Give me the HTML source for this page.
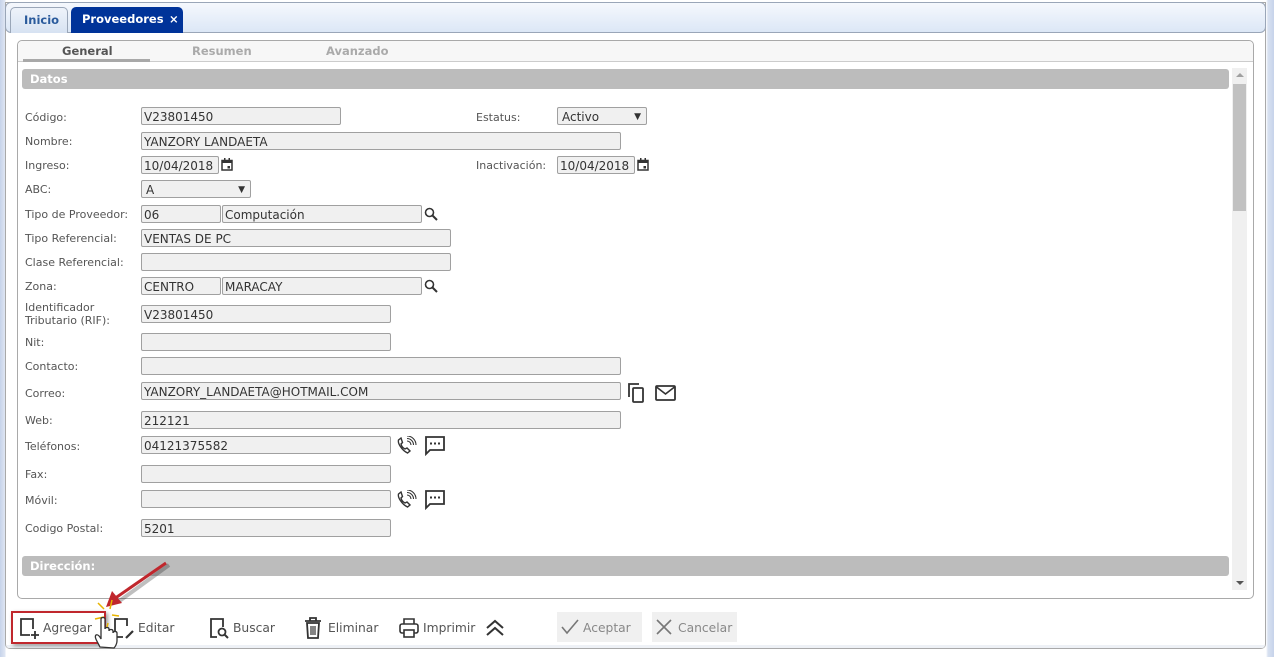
<!DOCTYPE html>
<html><head><meta charset="utf-8">
<style>
*{box-sizing:border-box;margin:0;padding:0}
body{width:1274px;height:655px;overflow:hidden;background:linear-gradient(90deg,#c6d3ea 0,#dfe6f3 5px,#fff 6px,#fff 1266px,#d8e1f1 1268px,#c6d3ea 100%);font-family:"DejaVu Sans","Liberation Sans",sans-serif;position:relative}
.a{position:absolute}
.outer{left:5px;top:2px;width:1261px;height:647px;border:1px solid #a9a9a9;border-radius:0 0 5px 5px;background:#fff}
.hdr{left:5px;top:2px;width:1261px;height:31px;border:1px solid #9aa6b8;border-radius:6px;background:linear-gradient(#f5f8fd,#dce7f6)}
.tab{top:7px;height:26px;border-radius:5px 5px 0 0;font-weight:bold;font-size:11.5px;line-height:25px;padding-left:13px}
.inner{left:17px;top:40px;width:1237px;height:559px;border:1px solid #a9a9a9;border-radius:5px}
.sec{background:#bcbcbc;color:#fff;font-weight:bold;font-size:11.5px;line-height:20px;padding-left:8px;border-radius:3px}
.l{left:25px;font-size:11px;color:#555;line-height:13px}
.i{height:18px;background:#f0f0f0;border:1px solid #a0a0a0;border-radius:2px;font-size:12px;color:#333;line-height:18px;padding-left:2px;white-space:nowrap;overflow:hidden}
.tb{top:613px;height:30px;font-size:12.3px;color:#555;line-height:30px}
</style></head><body>
<div class="a outer"></div>
<div class="a hdr"></div>
<div class="a tab" style="left:10px;width:58px;border:1px solid #9aa6b8;border-bottom:none;background:linear-gradient(#eef3fa,#d7e2f2);color:#2a5a9c">Inicio</div>
<div class="a tab" style="left:71px;width:112px;background:#003399;color:#fff;padding-left:11px">Proveedores<span style="position:absolute;left:98px">×</span></div>

<div class="a inner"></div>
<div class="a" style="left:18px;top:41px;width:1235px;height:21px;background:#f7f7f7;border-bottom:1px solid #ccc;border-radius:5px 5px 0 0"></div>
<div class="a" style="left:62px;top:44px;font-size:11.5px;font-weight:bold;color:#555">General</div>
<div class="a" style="left:192px;top:44px;font-size:11.5px;font-weight:bold;color:#aaa">Resumen</div>
<div class="a" style="left:326px;top:44px;font-size:11.5px;font-weight:bold;color:#aaa">Avanzado</div>
<div class="a" style="left:23px;top:59px;width:127px;height:3px;background:#a9a9a9"></div>

<div class="a sec" style="left:22px;top:69px;width:1207px">Datos</div>
<div class="a sec" style="left:22px;top:556px;width:1207px">Dirección:</div>
<div class="a" style="left:1232px;top:68px;width:15px;height:522px;background:#f0f0f0"></div>
<div class="a" style="left:1233px;top:84px;width:13px;height:127px;background:#c1c1c1"></div>
<div class="a" style="left:1236px;top:73px;width:0;height:0;border:4px solid transparent;border-bottom-color:#a0a0a0;border-top:0"></div>
<div class="a" style="left:1236px;top:581px;width:0;height:0;border:4px solid transparent;border-top-color:#555;border-bottom:0"></div>

<div class="a l" style="top:111px">Código:</div><div class="a i" style="left:141px;top:107px;width:200px">V23801450</div>
<div class="a l" style="left:476px;top:111px">Estatus:</div><div class="a i" style="left:557px;top:107px;width:90px;background:#f0f0f0;padding-left:4px">Activo<span style="position:absolute;right:5px;font-size:9px">▼</span></div>
<div class="a l" style="top:135px">Nombre:</div><div class="a i" style="left:141px;top:132px;width:480px">YANZORY LANDAETA</div>
<div class="a l" style="top:159px">Ingreso:</div><div class="a i" style="left:141px;top:156px;width:78px">10/04/2018</div>
<svg class="a" style="left:221px;top:158px" width="12" height="13" viewBox="0 0 12 13"><rect x="1" y="2.5" width="10" height="9.5" fill="none" stroke="#333" stroke-width="1.5"/><rect x="1" y="2" width="10" height="3" fill="#333"/><rect x="3" y="0" width="1.5" height="3" fill="#333"/><rect x="7.5" y="0" width="1.5" height="3" fill="#333"/><rect x="6.5" y="8" width="2.5" height="2.5" fill="#333"/></svg>
<div class="a l" style="left:476px;top:159px">Inactivación:</div><div class="a i" style="left:557px;top:156px;width:78px">10/04/2018</div>
<svg class="a" style="left:637px;top:158px" width="12" height="13" viewBox="0 0 12 13"><rect x="1" y="2.5" width="10" height="9.5" fill="none" stroke="#333" stroke-width="1.5"/><rect x="1" y="2" width="10" height="3" fill="#333"/><rect x="3" y="0" width="1.5" height="3" fill="#333"/><rect x="7.5" y="0" width="1.5" height="3" fill="#333"/><rect x="6.5" y="8" width="2.5" height="2.5" fill="#333"/></svg>
<div class="a l" style="top:183px">ABC:</div><div class="a i" style="left:141px;top:180px;width:110px;padding-left:4px">A<span style="position:absolute;right:5px;font-size:9px">▼</span></div>
<div class="a l" style="top:208px">Tipo de Proveedor:</div><div class="a i" style="left:141px;top:205px;width:80px">06</div><div class="a i" style="left:222px;top:205px;width:200px">Computación</div>
<svg class="a" style="left:424px;top:207px" width="14" height="14" viewBox="0 0 14 14"><circle cx="5.5" cy="5.5" r="4" fill="none" stroke="#333" stroke-width="1.6"/><path d="M8.5 8.5L13 13" stroke="#333" stroke-width="2"/></svg>
<div class="a l" style="top:232px">Tipo Referencial:</div><div class="a i" style="left:141px;top:229px;width:310px">VENTAS DE PC</div>
<div class="a l" style="top:256px">Clase Referencial:</div><div class="a i" style="left:141px;top:253px;width:310px"></div>
<div class="a l" style="top:280px">Zona:</div><div class="a i" style="left:141px;top:277px;width:80px">CENTRO</div><div class="a i" style="left:222px;top:277px;width:200px">MARACAY</div>
<svg class="a" style="left:424px;top:279px" width="14" height="14" viewBox="0 0 14 14"><circle cx="5.5" cy="5.5" r="4" fill="none" stroke="#333" stroke-width="1.6"/><path d="M8.5 8.5L13 13" stroke="#333" stroke-width="2"/></svg>
<div class="a l" style="top:301px">Identificador<br>Tributario (RIF):</div><div class="a i" style="left:141px;top:305px;width:250px">V23801450</div>
<div class="a l" style="top:336px">Nit:</div><div class="a i" style="left:141px;top:333px;width:250px"></div>
<div class="a l" style="top:360px">Contacto:</div><div class="a i" style="left:141px;top:357px;width:480px"></div>
<div class="a l" style="top:387px">Correo:</div><div class="a i" style="left:141px;top:382px;width:480px">YANZORY_LANDAETA@HOTMAIL.COM</div>
<svg class="a" style="left:628px;top:383px" width="18" height="20" viewBox="0 0 18 20"><path d="M1 14V1h10" fill="none" stroke="#333" stroke-width="1.8"/><rect x="5" y="5" width="10" height="14" rx="1" fill="none" stroke="#333" stroke-width="1.8"/></svg>
<svg class="a" style="left:655px;top:385px" width="21" height="16" viewBox="0 0 21 16"><rect x="1" y="1" width="19" height="14" rx="1" fill="none" stroke="#333" stroke-width="1.8"/><path d="M1.5 2l9 7 9-7" fill="none" stroke="#333" stroke-width="1.6"/></svg>
<div class="a l" style="top:414px">Web:</div><div class="a i" style="left:141px;top:411px;width:480px">212121</div>
<div class="a l" style="top:440px">Teléfonos:</div><div class="a i" style="left:141px;top:436px;width:250px">04121375582</div>
<div class="a l" style="top:468px">Fax:</div><div class="a i" style="left:141px;top:465px;width:250px"></div>
<div class="a l" style="top:494px">Móvil:</div><div class="a i" style="left:141px;top:490px;width:250px"></div>
<div class="a l" style="top:522px">Codigo Postal:</div><div class="a i" style="left:141px;top:519px;width:250px">5201</div>
<svg class="a" style="left:396px;top:436px" width="22" height="20" viewBox="0 0 22 20"><path d="M5 2L2.5 4c-1 3 3 10 9 13l2.5-2-3-3-2 1c-2-1-3.5-3-4-5l1.5-1.5z" fill="none" stroke="#333" stroke-width="1.4"/><path d="M11 5a4 4 0 014 4M11 2.5a6.5 6.5 0 016.5 6.5M11 0a9 9 0 019 9" fill="none" stroke="#333" stroke-width="1.1"/></svg>
<svg class="a" style="left:425px;top:436px" width="20" height="20" viewBox="0 0 20 20"><path d="M1 1h18v13H5l-4 4z" fill="none" stroke="#333" stroke-width="1.8"/><rect x="5" y="6.5" width="2" height="2" fill="#333"/><rect x="9" y="6.5" width="2" height="2" fill="#333"/><rect x="13" y="6.5" width="2" height="2" fill="#333"/></svg>
<svg class="a" style="left:396px;top:490px" width="22" height="20" viewBox="0 0 22 20"><path d="M5 2L2.5 4c-1 3 3 10 9 13l2.5-2-3-3-2 1c-2-1-3.5-3-4-5l1.5-1.5z" fill="none" stroke="#333" stroke-width="1.4"/><path d="M11 5a4 4 0 014 4M11 2.5a6.5 6.5 0 016.5 6.5M11 0a9 9 0 019 9" fill="none" stroke="#333" stroke-width="1.1"/></svg>
<svg class="a" style="left:425px;top:490px" width="20" height="20" viewBox="0 0 20 20"><path d="M1 1h18v13H5l-4 4z" fill="none" stroke="#333" stroke-width="1.8"/><rect x="5" y="6.5" width="2" height="2" fill="#333"/><rect x="9" y="6.5" width="2" height="2" fill="#333"/><rect x="13" y="6.5" width="2" height="2" fill="#333"/></svg>

<!-- toolbar -->
<div class="a" style="left:6px;top:645px;width:1259px;height:3px;background:#eef1f6;border-radius:0 0 5px 5px"></div>
<div class="a" style="left:11px;top:611px;width:95px;height:33px;border:2px solid #c0272d;box-shadow:2px 2px 4px rgba(0,0,0,.4)"></div>
<svg class="a" style="left:19px;top:617px" width="22" height="24" viewBox="0 0 22 24"><path d="M11 18H2V2h12v10" fill="none" stroke="#333" stroke-width="1.8"/><path d="M16 14v8M12 18h8" stroke="#333" stroke-width="1.8"/></svg>
<div class="a tb" style="left:43px">Agregar</div>
<svg class="a" style="left:113px;top:617px" width="22" height="24" viewBox="0 0 22 24"><path d="M10 20H2V2h12v7" fill="none" stroke="#333" stroke-width="1.8"/><path d="M13 21l7-7" stroke="#333" stroke-width="2.2"/></svg>
<div class="a tb" style="left:138px">Editar</div>
<svg class="a" style="left:209px;top:617px" width="22" height="24" viewBox="0 0 22 24"><path d="M8 20H2V2h12v8" fill="none" stroke="#333" stroke-width="1.8"/><circle cx="13" cy="15" r="3.5" fill="none" stroke="#333" stroke-width="1.8"/><path d="M15.5 17.5L19 21" stroke="#333" stroke-width="2"/></svg>
<div class="a tb" style="left:233px">Buscar</div>
<svg class="a" style="left:304px;top:617px" width="18" height="22" viewBox="0 0 18 22"><path d="M1 4h16M6 4V1h6v3" fill="none" stroke="#333" stroke-width="1.8"/><path d="M3 6h12l-1 15H4z" fill="none" stroke="#333" stroke-width="1.8"/><path d="M7 9v9M9 9v9M11 9v9" stroke="#333" stroke-width="1.2"/></svg>
<div class="a tb" style="left:328px">Eliminar</div>
<svg class="a" style="left:399px;top:618px" width="20" height="20" viewBox="0 0 20 20"><path d="M5 6V1h10v5" fill="none" stroke="#333" stroke-width="1.6"/><rect x="1" y="6" width="18" height="9" rx="2" fill="none" stroke="#333" stroke-width="1.6"/><rect x="5" y="12" width="10" height="7" fill="#fff" stroke="#333" stroke-width="1.6"/></svg>
<div class="a tb" style="left:423px">Imprimir</div>
<svg class="a" style="left:485px;top:619px" width="20" height="18" viewBox="0 0 20 18"><path d="M2 9l8-7 8 7M2 16l8-7 8 7" fill="none" stroke="#333" stroke-width="2"/></svg>
<div class="a" style="left:557px;top:612px;width:85px;height:30px;background:#f0f0f0"></div>
<svg class="a" style="left:561px;top:619px" width="18" height="16" viewBox="0 0 18 16"><path d="M1 8l5 6L17 1" fill="none" stroke="#777" stroke-width="1.6"/></svg>
<div class="a tb" style="left:583px;color:#888">Aceptar</div>
<div class="a" style="left:652px;top:612px;width:85px;height:30px;background:#f0f0f0"></div>
<svg class="a" style="left:656px;top:619px" width="16" height="16" viewBox="0 0 16 16"><path d="M1 1l14 14M15 1L1 15" stroke="#777" stroke-width="1.6"/></svg>
<div class="a tb" style="left:678px;color:#888">Cancelar</div>

<!-- arrow + cursor -->
<svg class="a" style="left:84px;top:557px" width="100" height="100" viewBox="0 0 100 100">
<path d="M85 8L34 45" stroke="#000" stroke-opacity=".25" stroke-width="4"/>
<path d="M82 6L30 42" stroke="#c0272d" stroke-width="3"/>
<path d="M22 50L28 34L38 46z" fill="#c0272d"/>
<path d="M20 52l-6-6M20 60l-9 2M26 52l2-9M28 58l7 1M24 66l-2 8" stroke="#e8b400" stroke-width="1.5"/>
<path d="M16 90c-3-6-6-10-4-12 2-1 4 2 5 4V62c0-2 4-2 4 0v10c0-2 4-2 4 0v2c0-2 4-2 4 0v2c0-2 4-2 4 0v8c0 3-2 6-3 7z" fill="#fff" stroke="#333" stroke-width="1.3"/>
</svg>
</body></html>
